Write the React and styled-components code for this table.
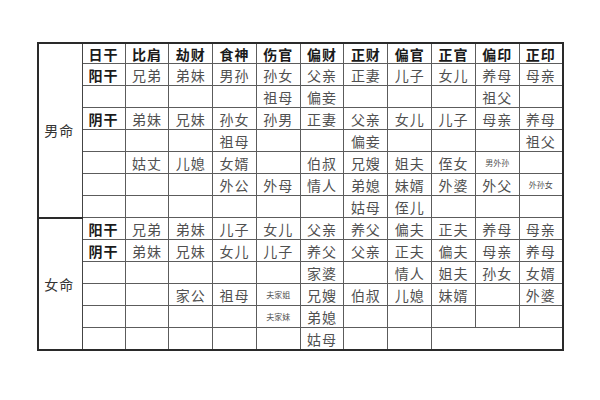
import React from "react"
import styled, { createGlobalStyle } from "styled-components"

const GlobalStyle = createGlobalStyle`
  html, body {
    margin: 0;
    padding: 0;
    background: #fff;
  }
  body {
    font-family: "Noto Sans CJK SC", "Noto Sans", sans-serif;
  }
`

const Page = styled.div`
  width: 600px;
  height: 400px;
  padding: 42px 0 0 37px;
  box-sizing: border-box;
`

const Table = styled.table`
  border-collapse: collapse;
  table-layout: fixed;
  width: 525px;
  border: 2px solid #2a2a2a;
`

const Cell = styled.td`
  border: 1px solid #5c5c5c;
  height: ${(p) => (p.$head ? "19px" : "21px")};
  padding: 0;
  text-align: center;
  vertical-align: middle;
  white-space: nowrap;
  overflow: hidden;
  font-size: ${(p) => (p.$small ? "8px" : "14px")};
  line-height: 1;
  font-weight: ${(p) => (p.$bold ? 700 : 400)};
  color: ${(p) => (p.$bold ? "#1a1a1a" : "#505050")};
  letter-spacing: ${(p) => (p.$small ? "0" : "1px")};
`

const Label = styled.td`
  border: 2px solid #2a2a2a;
  border-right-width: 1px;
  border-right-color: #444;
  padding: 0 2px 0 0;
  text-align: center;
  vertical-align: middle;
  font-size: 14px;
  color: #333;
  letter-spacing: 1px;
`

const header = ["日干", "比肩", "劫财", "食神", "伤官", "偏财", "正财", "偏官", "正官", "偏印", "正印"]

const smallWords = ["男外孙", "外孙女", "夫家姐", "夫家妹"]

const male = [
  ["阳干", "兄弟", "弟妹", "男孙", "孙女", "父亲", "正妻", "儿子", "女儿", "养母", "母亲"],
  ["", "", "", "", "祖母", "偏妾", "", "", "", "祖父", ""],
  ["阴干", "弟妹", "兄妹", "孙女", "孙男", "正妻", "父亲", "女儿", "儿子", "母亲", "养母"],
  ["", "", "", "祖母", "", "", "偏妾", "", "", "", "祖父"],
  ["", "姑丈", "儿媳", "女婿", "", "伯叔", "兄嫂", "姐夫", "侄女", "男外孙", ""],
  ["", "", "", "外公", "外母", "情人", "弟媳", "妹婿", "外婆", "外父", "外孙女"],
  ["", "", "", "", "", "", "姑母", "侄儿", "", "", ""],
]

// last row: the three rightmost columns are one merged cell
const female = [
  ["阳干", "兄弟", "弟妹", "儿子", "女儿", "父亲", "养父", "偏夫", "正夫", "养母", "母亲"],
  ["阴干", "弟妹", "兄妹", "女儿", "儿子", "养父", "父亲", "正夫", "偏夫", "母亲", "养母"],
  ["", "", "", "", "", "家婆", "", "情人", "姐夫", "孙女", "女婿"],
  ["", "", "家公", "祖母", "夫家姐", "兄嫂", "伯叔", "儿媳", "妹婿", "", "外婆"],
  ["", "", "", "", "夫家妹", "弟媳", "", "", "", "", ""],
  ["", "", "", "", "", "姑母", "", "", ""],
]

const Row = ({ cells, label, span, last }) => (
  <tr>
    {label && <Label rowSpan={span}>{label}</Label>}
    {cells.map((text, i) => (
      <Cell
        key={i}
        $bold={i === 0}
        $small={smallWords.includes(text)}
        colSpan={last && i === cells.length - 1 ? 3 : 1}
      >
        {text}
      </Cell>
    ))}
  </tr>
)

const App = () => (
  <Page>
    <GlobalStyle />
    <Table>
      <colgroup>
        <col style={{ width: "44px" }} />
        <col style={{ width: "43px" }} />
        {header.slice(1).map((h) => (
          <col key={h} style={{ width: "43.8px" }} />
        ))}
      </colgroup>
      <tbody>
        <tr>
          <Label rowSpan={male.length + 1}>男命</Label>
          {header.map((h) => (
            <Cell key={h} $head $bold>
              {h}
            </Cell>
          ))}
        </tr>
        {male.map((cells, i) => (
          <Row key={i} cells={cells} />
        ))}
        {female.map((cells, i) => (
          <Row
            key={i}
            cells={cells}
            label={i === 0 ? "女命" : null}
            span={female.length}
            last={i === female.length - 1}
          />
        ))}
      </tbody>
    </Table>
  </Page>
)

export default App
